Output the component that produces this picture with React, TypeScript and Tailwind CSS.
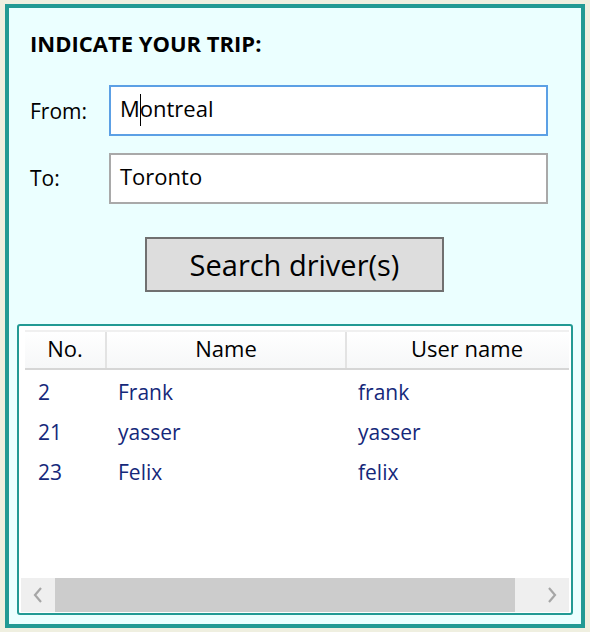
import React from "react";

const drivers = [
  { no: "2", name: "Frank", user: "frank" },
  { no: "21", name: "yasser", user: "yasser" },
  { no: "23", name: "Felix", user: "felix" },
];

function Chevron({ dir }: { dir: "left" | "right" }) {
  return (
    <svg width="10" height="16" viewBox="0 0 10 16" className="block">
      <polyline
        points={dir === "left" ? "8,1 2,8 8,15" : "2,1 8,8 2,15"}
        fill="none"
        stroke="#a6a6a6"
        strokeWidth="2.2"
      />
    </svg>
  );
}

export default function App() {
  return (
    <div
      className="w-[590px] h-[632px] bg-[#efefe0] pt-[4px] pl-[5px] overflow-hidden"
      style={{ fontFamily: '"Open Sans", "Noto Sans", sans-serif' }}
    >
      <div className="w-[580px] h-[624px] box-border border-4 border-[#229a94] bg-[#ebffff] flex flex-col">
        {/* Title */}
        <div className="pt-[24px] pl-[21px] text-[22px] leading-[22px] font-bold text-black">
          INDICATE YOUR TRIP:
        </div>

        {/* From */}
        <div className="mt-[31px] pl-[21px] flex items-center h-[51px]">
          <span className="w-[79px] pt-[3px] text-[21px] text-black">From:</span>
          <div className="w-[439px] h-[51px] box-border border-2 border-[#5ca0e5] bg-white flex items-center pl-[9px] pb-[4px] text-[22px] text-black">
            <span>M</span>
            <span className="inline-block w-px h-[32px] bg-black -mr-px mt-[3px]"></span>
            <span>ontreal</span>
          </div>
        </div>

        {/* To */}
        <div className="mt-[17px] pl-[21px] flex items-center h-[51px]">
          <span className="w-[79px] pt-[1px] text-[21px] text-black">To:</span>
          <div className="w-[439px] h-[51px] box-border border-2 border-[#a9a9a9] bg-white flex items-center pl-[9px] pb-[4px] text-[22px] text-black">
            Toronto
          </div>
        </div>

        {/* Search button */}
        <button className="mt-[33px] ml-[136px] w-[299px] h-[55px] box-border border-2 border-[#707070] bg-[#dddddd] text-[29px] text-black flex items-center justify-center">
          Search driver(s)
        </button>

        {/* Drivers table */}
        <div className="mt-[32px] ml-[8px] w-[556px] h-[291px] box-border border-2 border-[#229a94] rounded-[3px] bg-white pt-[2px] px-[2px] pb-[1px]">
          <div className="w-full h-full flex flex-col overflow-hidden">
            <div className="mt-[2px] ml-[4px] flex h-[40px] shrink-0 box-border border-t-2 border-t-[#f0f0f0] border-b-2 border-b-[#d6d6d6] bg-gradient-to-b from-white to-[#f6f7f8] text-[22px] text-black">
              <div className="w-[80px] shrink-0 flex items-center justify-center pb-[4px]">No.</div>
              <div className="w-[240px] shrink-0 flex items-center justify-center pb-[4px] border-l-2 border-[#e3e3e3]">
                Name
              </div>
              <div className="w-[242px] shrink-0 flex items-center justify-center pb-[4px] border-l-2 border-[#e3e3e3]">
                User name
              </div>
            </div>

            <div className="mt-[3px] ml-[4px] flex flex-col text-[21px] text-[#15287a]">
              {drivers.map((d) => (
                <div key={d.no} className="flex h-[40px] items-center">
                  <div className="w-[80px] shrink-0 pl-[13px]">{d.no}</div>
                  <div className="w-[240px] shrink-0 pl-[13px]">{d.name}</div>
                  <div className="w-[242px] shrink-0 pl-[13px]">{d.user}</div>
                </div>
              ))}
            </div>

            <div className="flex-1" />

            {/* Horizontal scrollbar */}
            <div className="h-[34px] shrink-0 flex bg-[#efefef]">
              <div className="w-[34px] flex items-center justify-center">
                <Chevron dir="left" />
              </div>
              <div className="w-[460px] bg-[#cccccc]" />
              <div className="flex-1 flex items-center justify-end pr-[12px]">
                <Chevron dir="right" />
              </div>
            </div>
          </div>
        </div>
      </div>
    </div>
  );
}
